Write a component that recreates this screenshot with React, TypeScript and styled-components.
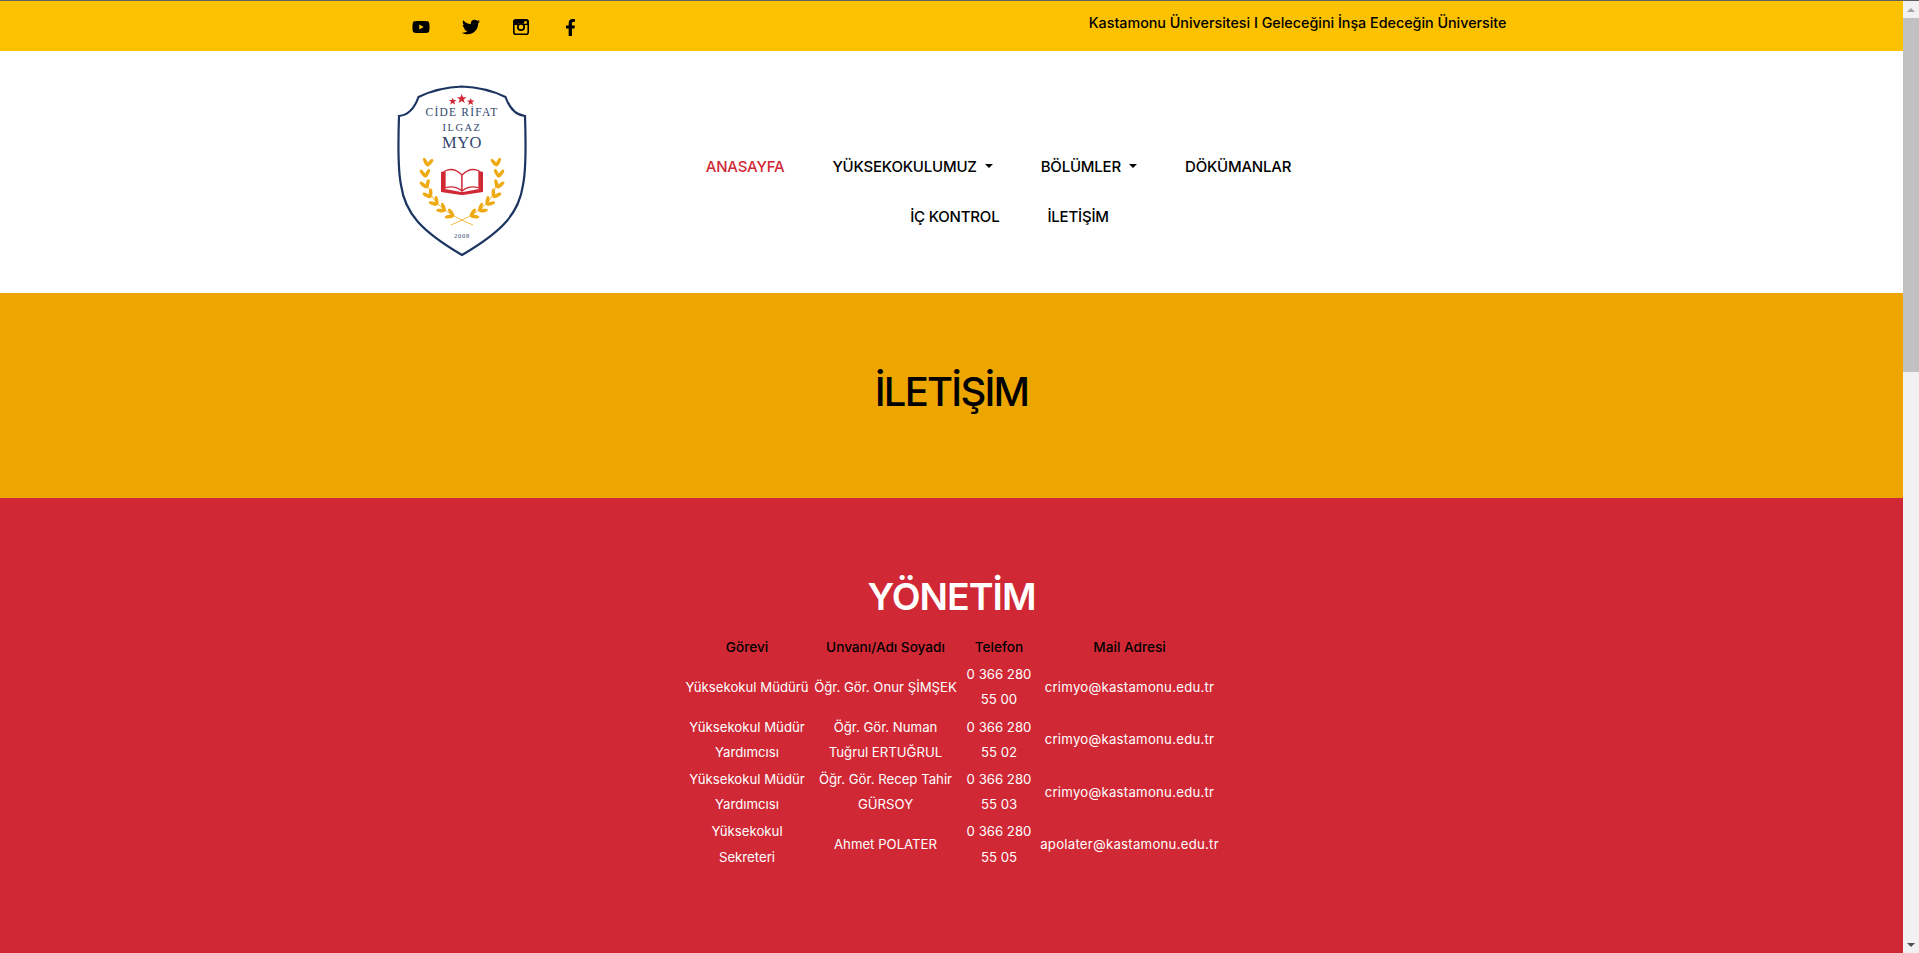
import React from "react";
import styled, { createGlobalStyle } from "styled-components";
import { FaFacebookF, FaTwitter, FaYoutube } from "react-icons/fa";

const GlobalStyle = createGlobalStyle`
  html, body {
    margin: 0;
    height: 100%;
    overflow: hidden;
    font-family: Inter, "Liberation Sans", sans-serif;
  }
  #root {
    height: 100%;
  }
`;

const Viewport = styled.div`
  display: flex;
  height: 953px;
  border-top: 1px solid #5f5f5f;
  box-sizing: border-box;
`;

const Page = styled.main`
  flex: 1;
  min-width: 0;
  overflow: hidden;
`;

const ScrollTrack = styled.div`
  width: 16px;
  flex: none;
  background: #f1f1f1;
  display: flex;
  flex-direction: column;
  align-items: center;
`;

const ScrollArrow = styled.div<{ $down?: boolean }>`
  height: 17px;
  flex: none;
  display: flex;
  align-items: center;
  justify-content: center;

  &::before {
    content: "";
    border-left: 4px solid transparent;
    border-right: 4px solid transparent;
    ${(p) =>
      p.$down
        ? "border-top: 4px solid #505050;"
        : "border-bottom: 4px solid #a3a3a3;"}
  }
`;

const ScrollThumb = styled.div`
  width: 100%;
  height: 354px;
  background: #c1c1c1;
`;

const ScrollRest = styled.div`
  flex: 1;
`;

const TopBar = styled.div`
  background: #fcc200;
  height: 50px;
`;

const Container = styled.div`
  width: 1140px;
  margin: 0 auto;
  padding: 0 15px;
  box-sizing: border-box;
`;

const TopRow = styled(Container)`
  display: flex;
  justify-content: space-between;
  align-items: flex-start;
`;

const Socials = styled.div`
  display: flex;
  gap: 32px;
  padding: 17px 0 0 15px;
`;

const SocialLink = styled.a`
  width: 18px;
  height: 18px;
  color: #000;
  font-size: 20px;
  display: flex;
  align-items: center;
  justify-content: center;
`;

const Slogan = styled.p`
  margin: 0;
  padding-top: 12px;
  font-size: 14.3px;
  line-height: 20px;
  font-weight: 500;
  color: #000;
`;

const Header = styled.header`
  background: #fff;
  height: 242px;
`;

const HeaderRow = styled(Container)`
  display: flex;
  height: 100%;
  align-items: flex-start;
`;

const LogoBox = styled.div`
  padding-top: 34px;
  width: 252px;
  flex: none;
`;

const Nav = styled.nav`
  width: 700px;
  flex: none;
  padding-top: 90px;
  display: flex;
  flex-wrap: wrap;
  justify-content: center;
`;

const NavItem = styled.a<{ $active?: boolean; $caret?: boolean; $inset?: boolean }>`
  padding: 0 24px;
  height: 50px;
  display: flex;
  align-items: center;
  font-size: 15px;
  font-weight: 500;
  letter-spacing: -0.2px;
  white-space: nowrap;
  color: ${(p) => (p.$active ? "#d12836" : "#000")};
  margin-left: ${(p) => (p.$inset ? "22px" : "0")};

  ${(p) =>
    p.$caret &&
    `&::after {
      content: "";
      margin-left: 8px;
      border-top: 4px solid #000;
      border-left: 4px solid transparent;
      border-right: 4px solid transparent;
    }`}
`;

const TitleBand = styled.section`
  background: #eda600;
  height: 205px;
  padding-bottom: 8px;
  box-sizing: border-box;
  display: flex;
  align-items: center;
  justify-content: center;
`;

const PageTitle = styled.h1`
  margin: 0;
  font-size: 40px;
  font-weight: 500;
  letter-spacing: -1.8px;
  color: #000;
`;

const Content = styled.section`
  background: #d12836;
  height: 455px;
  padding-top: 71px;
  box-sizing: border-box;
  display: flex;
  flex-direction: column;
  align-items: center;
`;

const SectionTitle = styled.h2`
  margin: 0 0 9px;
  font-size: 37.5px;
  line-height: 56px;
  font-weight: 600;
  letter-spacing: -1px;
  color: #fff;
`;

const StaffTable = styled.table`
  border-collapse: separate;
  border-spacing: 0;
  font-size: 13.2px;
  line-height: 25.2px;
  text-align: center;
  color: #fff;
  width: 538px;
  table-layout: fixed;

  th {
    font-size: 13.6px;
    font-weight: 450;
    color: #000;
    padding: 1px 0;
  }

  td {
    padding: 1px;
    vertical-align: middle;
  }
`;

const MailCell = styled.td`
  letter-spacing: 0.25px;
`;

function InstagramIcon() {
  return (
    <svg width="16" height="16" viewBox="0 0 16 16" aria-hidden="true">
      <rect x="0.8" y="0.8" width="14.4" height="14.4" rx="2" fill="none" stroke="#000" strokeWidth="1.6" />
      <path d="M1 6h4v-1.5h6V6h4V2.2L14 1H2L1 2z" fill="#000" />
      <circle cx="8" cy="8" r="3.2" fill="none" stroke="#000" strokeWidth="1.7" />
      <rect x="11.2" y="2.2" width="2.6" height="2.6" fill="#fcc200" />
    </svg>
  );
}

const leaves = [
  [31, 76, 8],
  [28, 87, -4],
  [28, 98, -16],
  [31, 108, -30],
  [37, 116, -42],
  [44, 123, -52],
  [52, 129, -66],
];

function Laurel({ flip }: { flip?: boolean }) {
  return (
    <g transform={flip ? "translate(130 0) scale(-1 1)" : undefined} fill="#eeaa12">
      {leaves.map(([x, y, r], i) => (
        <g key={i} transform={`translate(${x} ${y}) rotate(${r})`}>
          <ellipse cx="-2.6" cy="0" rx="1.8" ry="4.6" transform="rotate(-32)" />
          <ellipse cx="2.6" cy="0" rx="1.8" ry="4.6" transform="rotate(32)" />
        </g>
      ))}
      <path d="M31 96C31 112 42 126 76 140" fill="none" stroke="#eeaa12" strokeWidth="0.8" />
    </g>
  );
}

function Logo() {
  return (
    <svg width="130" height="172" viewBox="0 0 130 172" role="img" aria-label="Cide Rifat Ilgaz MYO">
      <path
        d="M65 1.5C50 2 36 5 21.500 12C18 22 12 30 2 31C1 60 1 85 4 100C8 128 24 146 65 170C106 146 122 128 126 100C129 85 129 60 128 31C118 30 112 22 108.500 12C94 5 80 2 65 1.5Z"
        fill="#fff"
        stroke="#1b3560"
        strokeWidth="2.2"
      />
      <g fill="#d12836">
        <polygon points="55.700,12.500 56.700,15 59.500,15 57.300,16.800 58.100,19.500 55.700,18 53.300,19.500 54.100,16.800 51.900,15 54.700,15" />
        <polygon points="64.700,9 66,12.300 69.500,12.300 66.700,14.500 67.700,18 64.700,16 61.700,18 62.700,14.500 59.900,12.300 63.400,12.300" />
        <polygon points="73.700,13 74.700,15.500 77.500,15.500 75.300,17.300 76.100,20 73.700,18.500 71.300,20 72.100,17.300 69.900,15.500 72.700,15.500" />
      </g>
      <g fontFamily='"Liberation Serif", serif' fill="#33466f" textAnchor="middle">
        <text x="65" y="31" fontSize="11.500" letterSpacing="1.200">CİDE RİFAT</text>
        <text x="65" y="46" fontSize="10.500" letterSpacing="1.500">ILGAZ</text>
        <text x="65" y="63" fontSize="16.500" letterSpacing="0.500">MYO</text>
        <text x="65" y="153" fontSize="6.500" letterSpacing="0.800">2008</text>
      </g>
      <Laurel />
      <Laurel flip />
      <path d="M44 87L48 86V104L64 107H66L82 104V86L86 87V107L66 110H64L44 107Z" fill="#d12836" />
      <g fill="#fff" stroke="#d12836" strokeWidth="1.300" strokeLinejoin="round">
        <path d="M48 86C54 83 60 85 65 90V106C60 102 54 101 48 103Z" />
        <path d="M82 86C76 83 70 85 65 90V106C70 102 76 101 82 103Z" />
      </g>
    </svg>
  );
}

const staff = [
  { role: "Yüksekokul Müdürü", name: "Öğr. Gör. Onur ŞİMŞEK", phone: "0 366 280 55 00", mail: "crimyo@kastamonu.edu.tr" },
  { role: "Yüksekokul Müdür Yardımcısı", name: "Öğr. Gör. Numan Tuğrul ERTUĞRUL", phone: "0 366 280 55 02", mail: "crimyo@kastamonu.edu.tr" },
  { role: "Yüksekokul Müdür Yardımcısı", name: "Öğr. Gör. Recep Tahir GÜRSOY", phone: "0 366 280 55 03", mail: "crimyo@kastamonu.edu.tr" },
  { role: "Yüksekokul Sekreteri", name: "Ahmet POLATER", phone: "0 366 280 55 05", mail: "apolater@kastamonu.edu.tr" },
];

export default function App() {
  return (
    <>
      <GlobalStyle />
      <Viewport>
        <Page>
          <TopBar>
            <TopRow>
              <Socials>
                <SocialLink><FaYoutube /></SocialLink>
                <SocialLink><FaTwitter size={18} /></SocialLink>
                <SocialLink><InstagramIcon /></SocialLink>
                <SocialLink><FaFacebookF size={17} /></SocialLink>
              </Socials>
              <Slogan>Kastamonu Üniversitesi I Geleceğini İnşa Edeceğin Üniversite</Slogan>
            </TopRow>
          </TopBar>
          <Header>
            <HeaderRow>
              <LogoBox><Logo /></LogoBox>
              <Nav>
                <NavItem $active>ANASAYFA</NavItem>
                <NavItem $caret>YÜKSEKOKULUMUZ</NavItem>
                <NavItem $caret>BÖLÜMLER</NavItem>
                <NavItem>DÖKÜMANLAR</NavItem>
                <NavItem $inset>İÇ KONTROL</NavItem>
                <NavItem>İLETİŞİM</NavItem>
              </Nav>
            </HeaderRow>
          </Header>
          <TitleBand>
            <PageTitle>İLETİŞİM</PageTitle>
          </TitleBand>
          <Content>
            <SectionTitle>YÖNETİM</SectionTitle>
            <StaffTable>
              <colgroup>
                <col width="129" />
                <col width="148" />
                <col width="79" />
                <col width="182" />
              </colgroup>
              <thead>
                <tr>
                  <th>Görevi</th>
                  <th>Unvanı/Adı Soyadı</th>
                  <th>Telefon</th>
                  <th>Mail Adresi</th>
                </tr>
              </thead>
              <tbody>
                {staff.map((person) => (
                  <tr key={person.name}>
                    <td>{person.role}</td>
                    <td>{person.name}</td>
                    <td>{person.phone}</td>
                    <MailCell>{person.mail}</MailCell>
                  </tr>
                ))}
              </tbody>
            </StaffTable>
          </Content>
        </Page>
        <ScrollTrack>
          <ScrollArrow />
          <ScrollThumb />
          <ScrollRest />
          <ScrollArrow $down />
        </ScrollTrack>
      </Viewport>
    </>
  );
}
